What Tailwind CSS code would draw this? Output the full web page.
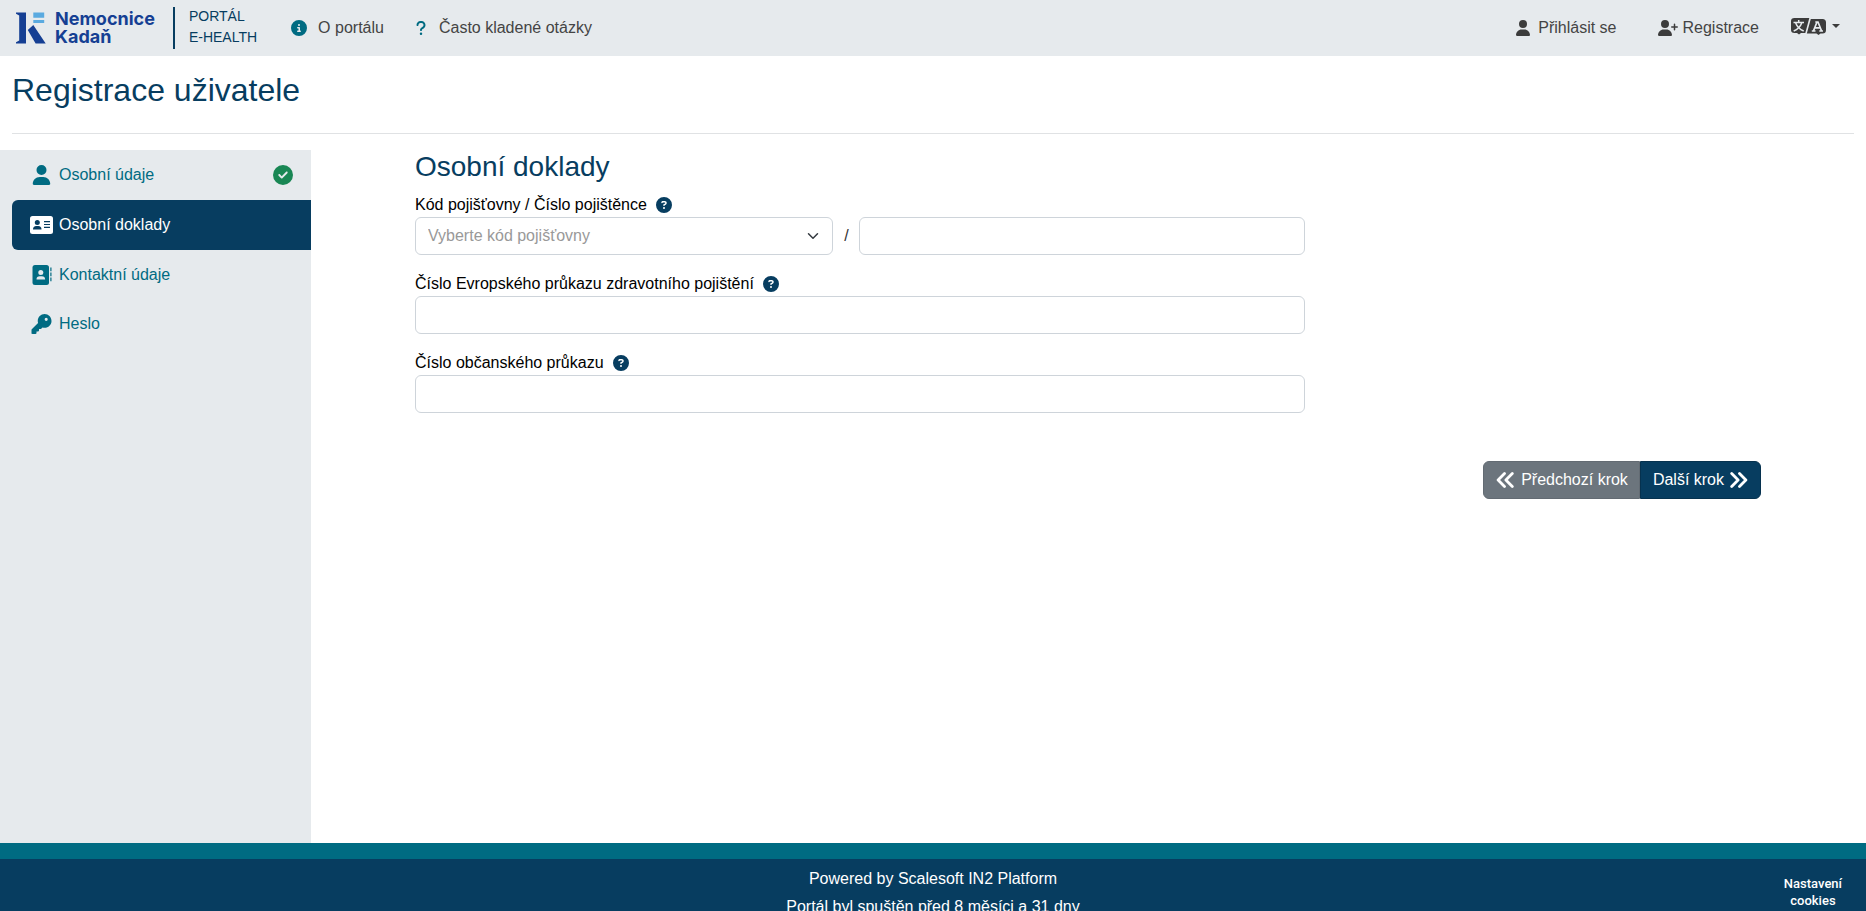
<!DOCTYPE html>
<html lang="cs">
<head>
<meta charset="utf-8">
<meta name="viewport" content="width=device-width, initial-scale=1">
<title>Registrace uživatele</title>
<script src="https://cdn.jsdelivr.net/npm/@tailwindcss/browser@4"></script>
</head>
<body class="flex h-screen flex-col overflow-hidden bg-white font-['Liberation_Sans',Arial,sans-serif] text-base text-black">

<svg class="hidden" aria-hidden="true">
  <symbol id="user" viewBox="0 0 448 512"><path d="M224 256A128 128 0 1 0 224 0a128 128 0 1 0 0 256zm-45.7 48C79.8 304 0 383.8 0 482.3C0 498.7 13.3 512 29.7 512H418.3c16.4 0 29.7-13.3 29.7-29.7C448 383.8 368.2 304 269.7 304H178.3z"/></symbol>
  <symbol id="help" viewBox="0 0 512 512"><path d="M256 512A256 256 0 1 0 256 0a256 256 0 1 0 0 512zM169.8 165.3c7.9-22.3 29.1-37.3 52.8-37.3h58.3c34.9 0 63.1 28.3 63.1 63.1c0 22.6-12.1 43.5-31.7 54.8L280 264.4c-.2 13-10.9 23.6-24 23.6c-13.3 0-24-10.7-24-24V250.5c0-8.6 4.6-16.5 12.1-20.8l44.3-25.4c4.7-2.7 7.6-7.7 7.6-13.1c0-8.4-6.8-15.1-15.1-15.1H222.6c-3.4 0-6.4 2.1-7.5 5.3l-.4 1.2c-4.4 12.5-18.2 19-30.6 14.6s-19-18.2-14.6-30.6l.4-1.2zM224 352a32 32 0 1 1 64 0 32 32 0 1 1 -64 0z"/></symbol>
</svg>

<header class="flex h-14 shrink-0 items-center bg-[#e6eaed] pl-4 pr-[26px] text-[#444444]">
  <a href="#" class="flex items-center">
    <svg class="h-[32px] w-[31px]" viewBox="1 0 31 32" aria-hidden="true">
      <path fill="#153f93" d="M1 0.500H11V31.500H1V30.200L4.200 28.500V3.500L1 1.800ZM12.800 18L18.300 13L30.700 31.500H20.600Z"/>
      <path fill="#5aaae0" d="M18.300 0.500H29.200V5.800H18.300ZM18.300 8H29.200V11H18.300Z"/>
    </svg>
    <span class="ml-2 font-['Inter','Liberation_Sans',sans-serif] text-lg/[18px] font-bold text-[#153f93]">Nemocnice<br>Kadaň</span>
    <span class="ml-[18px] h-[42px] w-0.5 bg-[#073d60]"></span>
    <span class="ml-3.5 pb-0.5 text-sm/[21px] text-[#073d60]">PORTÁL<br>E-HEALTH</span>
  </a>
  <nav class="ml-[34px] flex flex-1 items-center" aria-label="Hlavní navigace">
    <a href="#" class="flex items-center gap-[11px]">
      <svg class="size-4 fill-[#006b82]" viewBox="0 0 512 512" aria-hidden="true"><path d="M256 512A256 256 0 1 0 256 0a256 256 0 1 0 0 512zM216 336h24V272H216c-13.300 0-24-10.700-24-24s10.700-24 24-24h48c13.300 0 24 10.700 24 24v88h8c13.300 0 24 10.700 24 24s-10.700 24-24 24H216c-13.300 0-24-10.700-24-24s10.700-24 24-24zm40-208a32 32 0 1 1 0 64 32 32 0 1 1 0-64z"/></svg>
      O portálu
    </a>
    <a href="#" class="ml-8 flex items-center gap-[13px]">
      <svg class="h-4 w-2.5 fill-[#006b82]" viewBox="0 0 320 512" aria-hidden="true"><path d="M80 160c0-35.300 28.700-64 64-64h32c35.300 0 64 28.700 64 64v3.600c0 21.800-11.100 42.100-29.400 53.800l-42.200 27.100c-25.200 16.200-40.400 44.100-40.400 74V320c0 17.700 14.300 32 32 32s32-14.300 32-32v-1.400c0-8.200 4.200-15.800 11-20.200l42.200-27.100c36.600-23.600 58.800-64.100 58.800-107.700V160c0-70.700-57.300-128-128-128H144C73.300 32 16 89.300 16 160c0 17.700 14.300 32 32 32s32-14.300 32-32zm80 320a40 40 0 1 0 0-80 40 40 0 1 0 0 80z"/></svg>
      Často kladené otázky
    </a>
    <a href="#" class="ml-auto flex items-center gap-2">
      <svg class="h-4 w-3.5 fill-[#3c3c3c]" aria-hidden="true"><use href="#user"/></svg>
      Přihlásit se
    </a>
    <a href="#" class="ml-[41px] flex items-center gap-[5px]">
      <svg class="h-4 w-5 fill-[#3c3c3c]" viewBox="0 0 640 512" aria-hidden="true"><path d="M96 128a128 128 0 1 1 256 0A128 128 0 1 1 96 128zM0 482.300C0 383.800 79.800 304 178.300 304h91.400C368.200 304 448 383.800 448 482.300c0 16.400-13.300 29.700-29.700 29.700H29.700C13.300 512 0 498.700 0 482.300zM504 312V248H440c-13.300 0-24-10.700-24-24s10.700-24 24-24h64V136c0-13.300 10.700-24 24-24s24 10.700 24 24v64h64c13.300 0 24 10.700 24 24s-10.700 24-24 24H552v64c0 13.300-10.700 24-24 24s-24-10.700-24-24z"/></svg>
      Registrace
    </a>
    <button type="button" class="ml-8 flex items-center gap-1.5 pb-1" aria-label="Jazyk">
      <svg class="h-[17px] w-[35px]" viewBox="0 0 35 17" fill="none" aria-hidden="true">
        <path fill="#3c3c3c" d="M3.500 0H18.300L14.300 15H10L8 16.500L6 15H3.500Q0 15 0 12V3Q0 0 3.500 0ZM19.800 1H31.500Q35 1 35 4.500V12Q35 15.500 31.500 15.500H29.500L27.500 17L25.500 15.500H15.800Z"/>
        <path stroke="#e6eaed" stroke-width="1.500" d="M2.500 4.500H13M7.700 2V4.500M4.700 5Q6.700 10.500 12.700 13M10.700 5Q8.700 10.500 2.700 13"/>
        <path stroke="#e6eaed" stroke-width="1.700" d="M22.500 12.800L26 4H27L30.500 12.800M24 9.800H29M20.800 13H24.500M28.300 13H32M24.300 4H27"/>
      </svg>
      <svg class="h-1 w-2 fill-[#3c3c3c]" viewBox="0 0 8 4" aria-hidden="true"><path d="M0 0H8L4 4Z"/></svg>
    </button>
  </nav>
</header>

<div class="shrink-0 px-3 pt-[15px]">
  <h1 class="border-b border-[#e0e2e4] pb-[23px] text-[32px]/[39px] text-[#073d60]">Registrace uživatele</h1>
</div>

<div class="mt-4 flex min-h-0 flex-1">
  <nav class="w-1/6 shrink-0 bg-[#e6eaed] pl-3 text-[#006b82]" aria-label="Kroky registrace">
    <a href="#" class="flex h-[50px] items-center gap-[5px] pl-[17px] pr-[18px]">
      <svg class="h-5 w-[25px] fill-current" aria-hidden="true"><use href="#user"/></svg>
      <span class="flex-1">Osobní údaje</span>
      <svg class="size-5 fill-[#198754]" viewBox="0 0 512 512" role="img" aria-label="Hotovo"><path d="M256 512A256 256 0 1 0 256 0a256 256 0 1 0 0 512zM369 209L241 337c-9.400 9.400-24.600 9.400-33.900 0l-64-64c-9.400-9.400-9.400-24.600 0-33.900s24.600-9.400 33.900 0l47 47L335 175c9.400-9.400 24.600-9.400 33.900 0s9.400 24.600 0 33.900z"/></svg>
    </a>
    <a href="#" aria-current="step" class="flex h-[50px] items-center gap-[5px] rounded-l-md bg-[#073d60] pl-[17px] text-white">
      <svg class="h-5 w-[25px]" viewBox="0 0 25 20" aria-hidden="true">
        <rect x="1" y="1" width="23" height="18" rx="2.500" fill="white"/>
        <g fill="#073d60"><circle cx="8.300" cy="7.500" r="2.500"/><path d="M4 14.500Q4 11 7.300 11H9.300Q12.500 11 12.500 14.500Z"/><path d="M15 6H21V7.200H15ZM15 8.900H21V10.100H15ZM15 11.700H21V12.900H15Z"/></g>
      </svg>
      Osobní doklady
    </a>
    <a href="#" class="flex h-[49px] items-center gap-[5px] pl-[17px]">
      <svg class="h-5 w-[25px]" viewBox="0 0 25 20" aria-hidden="true">
        <rect x="3.500" y="0" width="16.500" height="20" rx="2.500" fill="currentColor"/>
        <path fill="currentColor" d="M21.300 2.500H22.500V6.200H21.300ZM21.300 7.500H22.500V11.200H21.300ZM21.300 12.500H22.500V16.200H21.300Z"/>
        <g fill="#e6eaed"><circle cx="11.800" cy="7.500" r="2.500"/><path d="M7.500 14.500Q7.500 11.200 10.800 11.200H12.800Q16.100 11.200 16.100 14.500Z"/></g>
      </svg>
      Kontaktní údaje
    </a>
    <a href="#" class="flex h-[49px] items-center gap-[5px] pl-[17px]">
      <svg class="h-5 w-[25px] fill-current" viewBox="0 0 512 512" aria-hidden="true"><path d="M336 352c97.200 0 176-78.800 176-176S433.200 0 336 0S160 78.800 160 176c0 18.700 2.900 36.800 8.300 53.700L7 391c-4.500 4.500-7 10.600-7 17v80c0 13.300 10.700 24 24 24h80c13.300 0 24-10.700 24-24V448h40c13.300 0 24-10.700 24-24V384h40c6.400 0 12.500-2.500 17-7l33.300-33.300c16.900 5.400 35 8.300 53.700 8.300zM376 96a40 40 0 1 1 0 80 40 40 0 1 1 0-80z"/></svg>
      Heslo
    </a>
  </nav>

  <main class="flex-1 pl-[104px] pr-[105px]">
    <form>
      <div class="w-2/3 pr-[7px]">
        <h2 class="text-[28px]/[34px] text-[#073d60]">Osobní doklady</h2>
        <div class="mt-2 flex h-[25px] items-center gap-[9px]">
          <label for="kod">Kód pojišťovny / Číslo pojištěnce</label>
          <svg class="size-4 fill-[#073d60]" role="img" aria-label="Nápověda"><use href="#help"/></svg>
        </div>
        <div class="flex items-center">
          <div class="relative w-[47%]">
            <select id="kod" class="h-[38px] w-full appearance-none rounded-md border border-[#ced4da] bg-white px-3 text-[#999999]"><option>Vyberte kód pojišťovny</option></select>
            <svg class="pointer-events-none absolute right-3.5 top-[13px] size-3" viewBox="0 0 16 16" fill="none" stroke="#343a40" stroke-width="2" stroke-linecap="round" stroke-linejoin="round" aria-hidden="true"><path d="M2 5l6 6 6-6"/></svg>
          </div>
          <span class="w-[26px] text-center text-[#333333]">/</span>
          <input type="text" aria-label="Číslo pojištěnce" class="h-[38px] min-w-0 flex-1 rounded-md border border-[#ced4da] px-3">
        </div>
        <div class="mt-4 flex h-[25px] items-center gap-[9px]">
          <label for="ehic">Číslo Evropského průkazu zdravotního pojištění</label>
          <svg class="size-4 fill-[#073d60]" role="img" aria-label="Nápověda"><use href="#help"/></svg>
        </div>
        <input id="ehic" type="text" class="block h-[38px] w-full rounded-md border border-[#ced4da] px-3">
        <div class="mt-4 flex h-[25px] items-center gap-[9px]">
          <label for="op">Číslo občanského průkazu</label>
          <svg class="size-4 fill-[#073d60]" role="img" aria-label="Nápověda"><use href="#help"/></svg>
        </div>
        <input id="op" type="text" class="block h-[38px] w-full rounded-md border border-[#ced4da] px-3">
      </div>
      <div class="mt-12 flex justify-end text-white">
        <button type="button" class="flex h-[38px] items-center gap-[7px] rounded-l-md border border-[#636b73] bg-[#6c757d] pl-3 pr-[11px]">
          <svg class="h-4 w-[18px]" viewBox="0 0 18 16" fill="none" stroke="currentColor" stroke-width="2.800" stroke-linecap="round" stroke-linejoin="round" aria-hidden="true"><path d="M8.500 1.600L2.100 8L8.500 14.400M16.300 1.600L9.900 8L16.300 14.400"/></svg>
          Předchozí krok
        </button>
        <button type="button" class="flex h-[38px] items-center gap-[6px] rounded-r-md border border-[#06324f] bg-[#073d60] px-3">
          Další krok
          <svg class="h-4 w-[18px]" viewBox="0 0 18 16" fill="none" stroke="currentColor" stroke-width="2.800" stroke-linecap="round" stroke-linejoin="round" aria-hidden="true"><path d="M1.700 1.600L8.100 8L1.700 14.400M9.500 1.600L15.900 8L9.500 14.400"/></svg>
        </button>
      </div>
    </form>
  </main>
</div>

<footer class="grid h-[68px] shrink-0 grid-cols-[1fr_auto_1fr] items-start border-t-16 border-[#006b82] bg-[#073d60] text-white">
  <p class="col-start-2 pt-[6px] text-center leading-7">Powered by Scalesoft IN2 Platform<br>Portál byl spuštěn před 8 měsíci a 31 dny</p>
  <button type="button" class="mr-6 mt-4 justify-self-end text-center font-['Roboto',sans-serif] text-[13px]/[17px] font-medium">Nastavení<br>cookies</button>
</footer>
</body>
</html>
